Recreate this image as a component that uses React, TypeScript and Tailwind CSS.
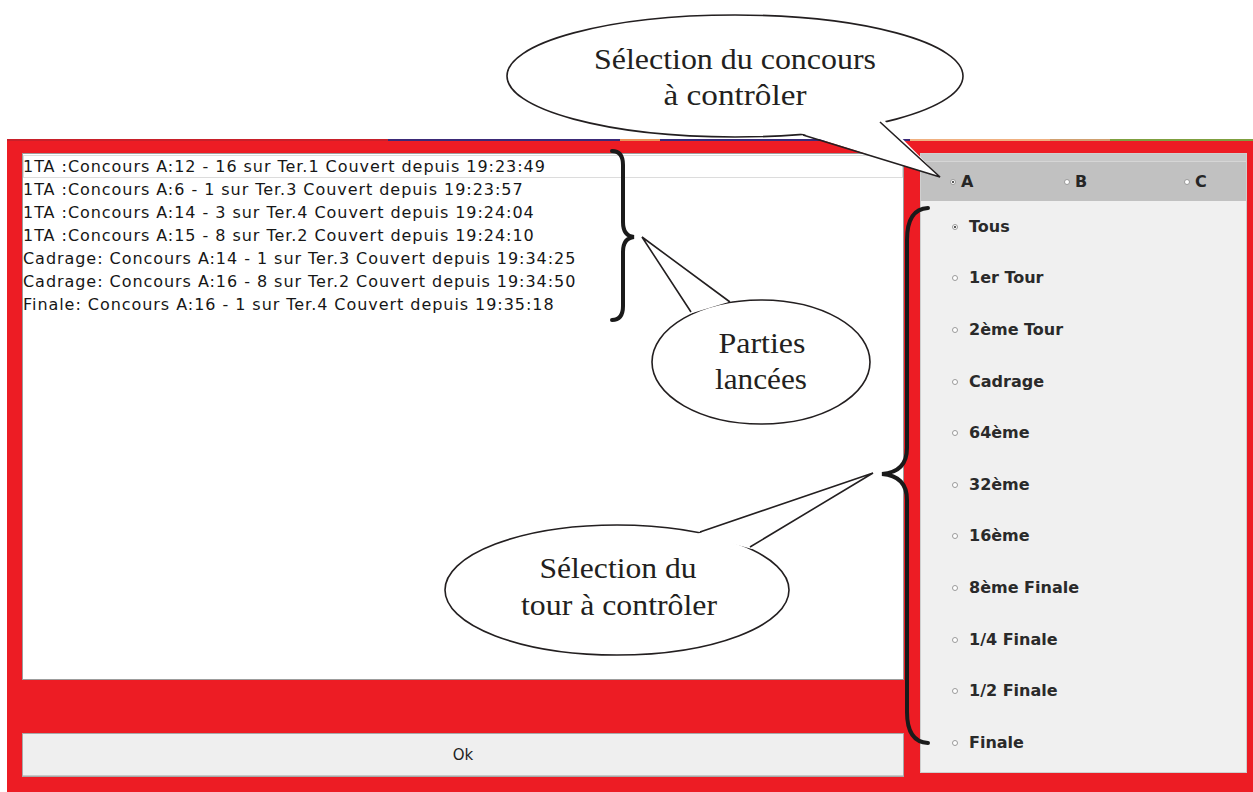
import React from "react";

const rows = [
  "1TA :Concours A:12 - 16 sur Ter.1 Couvert depuis 19:23:49",
  "1TA :Concours A:6 - 1 sur Ter.3 Couvert depuis 19:23:57",
  "1TA :Concours A:14 - 3 sur Ter.4 Couvert depuis 19:24:04",
  "1TA :Concours A:15 - 8 sur Ter.2 Couvert depuis 19:24:10",
  "Cadrage: Concours A:14 - 1 sur Ter.3 Couvert depuis 19:34:25",
  "Cadrage: Concours A:16 - 8 sur Ter.2 Couvert depuis 19:34:50",
  "Finale: Concours A:16 - 1 sur Ter.4 Couvert depuis 19:35:18",
];

const tours = [
  "Tous",
  "1er Tour",
  "2ème Tour",
  "Cadrage",
  "64ème",
  "32ème",
  "16ème",
  "8ème Finale",
  "1/4 Finale",
  "1/2 Finale",
  "Finale",
];

function Radio({ checked }: { checked?: boolean }) {
  return (
    <span className="flex h-[6px] w-[6px] shrink-0 items-center justify-center rounded-full border border-[#9a9a9a] bg-white">
      {checked && <span className="h-[2px] w-[2px] rounded-full bg-[#222]" />}
    </span>
  );
}

const serif = "'Liberation Serif', 'Times New Roman', serif";

function BubbleText({ x, y, len, children }: { x: number; y: number; len: number; children: string }) {
  return (
    <text
      x={x}
      y={y}
      textAnchor="middle"
      fontFamily={serif}
      fontSize={29}
      fill="#231f20"
      textLength={len}
      lengthAdjust="spacingAndGlyphs"
    >
      {children}
    </text>
  );
}

function Overlay() {
  const stroke = "#231f20";
  return (
    <svg
      className="pointer-events-none absolute left-0 top-0"
      width={1253}
      height={792}
      viewBox="0 0 1253 792"
    >
      {/* Bubble 1 */}
      <ellipse cx={735} cy={76} rx={228} ry={61} fill="white" stroke={stroke} strokeWidth={1.6} />
      <polygon points="800,133 883,119 940,177" fill="white" />
      <polyline points="803,135 940,177 880,122" fill="none" stroke={stroke} strokeWidth={1.6} />
      <BubbleText x={735} y={69} len={282}>Sélection du concours</BubbleText>
      <BubbleText x={735} y={105} len={143}>à contrôler</BubbleText>

      {/* Brace 1 */}
      <path
        d="M612,151 Q623,151 623,165 L623,222 Q623,236 634,237 Q623,238 623,252 L623,306 Q623,320 612,320"
        fill="none"
        stroke="#1a1a1a"
        strokeWidth={4}
        strokeLinecap="round"
      />

      {/* Bubble 2 */}
      <ellipse cx={761} cy={362} rx={109} ry={62} fill="white" stroke={stroke} strokeWidth={1.6} />
      <polygon points="689,314 732,301 642,237" fill="white" />
      <polyline points="691,312 642,237 730,302" fill="none" stroke={stroke} strokeWidth={1.6} />
      <BubbleText x={762} y={353} len={87}>Parties</BubbleText>
      <BubbleText x={761} y={389} len={92}>lancées</BubbleText>

      {/* Brace 2 */}
      <path
        d="M928,208 Q907,209 907,240 L907,448 Q907,472 882,474 Q907,476 907,500 L907,712 Q907,742 928,743"
        fill="none"
        stroke="#1a1a1a"
        strokeWidth={4}
        strokeLinecap="round"
      />

      {/* Bubble 3 */}
      <ellipse cx={617} cy={590} rx={172} ry={65} fill="white" stroke={stroke} strokeWidth={1.6} />
      <polygon points="697,534 752,549 873,473" fill="white" />
      <polyline points="700,532 873,473 750,547" fill="none" stroke={stroke} strokeWidth={1.6} />
      <BubbleText x={618} y={578} len={157}>Sélection du</BubbleText>
      <BubbleText x={619} y={615} len={196}>tour à contrôler</BubbleText>
    </svg>
  );
}

export default function App() {
  return (
    <div
      className="relative h-[792px] w-[1253px] overflow-hidden bg-white"
      style={{ fontFamily: "'DejaVu Sans', sans-serif" }}
    >
      <div className="h-[139px]" />
      {/* cropped title strip */}
      <div className="ml-[7px] flex h-[2px]">
        <div className="w-[381px] bg-[#c8202a]" />
        <div className="w-[232px] bg-[#3b2a78]" />
        <div className="w-[40px] bg-[#e8925a]" />
        <div className="w-[250px] bg-[#3b2a78]" />
        <div className="w-[140px] bg-[#f0b080]" />
        <div className="w-[60px] bg-[#d0a070]" />
        <div className="flex-1 bg-[#7fa040]" />
      </div>
      <div className="ml-[7px] flex h-[651px] bg-[#ed1c24] pb-[15px] pl-[15px] pr-[6px] pt-[12px]">
        {/* Left column */}
        <div className="flex w-[882px] flex-col">
          <div className="h-[527px] border border-[#9c9c9c] bg-white pt-[1px] text-[16px] tracking-[0.95px] text-[#161616]">
            {rows.map((r, i) => (
              <div
                key={i}
                className={
                  "flex h-[23px] items-center whitespace-nowrap leading-none " +
                  (i === 0 ? "outline outline-1 -outline-offset-1 outline-[#dcdcdc]" : "")
                }
              >
                {r}
              </div>
            ))}
          </div>
          <div className="h-[53px]" />
          <div className="flex h-[44px] items-center justify-center border border-[#a8a8a8] bg-[#efefef] text-[15px] text-[#1e1e1e] shadow-[inset_0_-1px_0_#c8c8c8]">
            Ok
          </div>
        </div>
        <div className="w-[16px]" />
        {/* Right panel */}
        <div className="flex h-[620px] w-[327px] flex-col border border-[#cfcfcf] bg-[#f0f0f0]">
          <div className="flex h-[47px] flex-col bg-[#c1c1c1]">
            <div className="h-[8px] border-b border-[#d6d6d6] bg-[#c8c8c8]" />
            <div className="flex flex-1 items-center pl-[29px] text-[16px] font-bold text-[#262626]">
              <div className="flex w-[114px] items-center gap-[5px]">
                <Radio checked />
                <span>A</span>
              </div>
              <div className="flex w-[120px] items-center gap-[5px]">
                <Radio />
                <span>B</span>
              </div>
              <div className="flex items-center gap-[5px]">
                <Radio />
                <span>C</span>
              </div>
            </div>
          </div>
          <div className="flex flex-col">
            {tours.map((t, i) => (
              <div
                key={t}
                className="flex h-[51.6px] items-center gap-[11px] pl-[31px] text-[16px] font-bold text-[#2a2a2a]"
              >
                <Radio checked={i === 0} />
                <span>{t}</span>
              </div>
            ))}
          </div>
        </div>
      </div>
      <Overlay />
    </div>
  );
}
